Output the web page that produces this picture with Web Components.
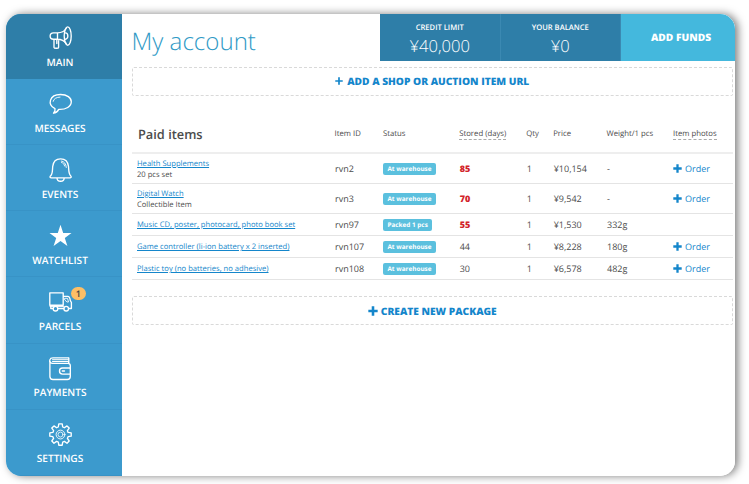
<!DOCTYPE html>
<html lang="en">
<head>
<meta charset="utf-8">
<title>My account</title>
<style>
body{margin:0;background:#fff;width:749px;height:484px;overflow:hidden;font-family:"Open Sans","Noto Sans",sans-serif;color:#4c4c4c;text-rendering:geometricPrecision}
</style>
</head>
<body>
<account-app></account-app>
<script>
function define(name, html){
  customElements.define(name, class extends HTMLElement{
    connectedCallback(){
      if(this.shadowRoot) return;
      const a = k => this.getAttribute(k) || '';
      this.attachShadow({mode:'open'}).innerHTML = typeof html === 'function' ? html(a) : html;
    }
  });
}

const ICONS = {
  megaphone:'<ellipse cx="18.700" cy="10" rx="3.500" ry="9.200"/><path d="M17.200 2.500C15 6 12 6.800 8.500 6.800H4.500C0 6.800 0 13.200 4.500 13.200H8.500C12 13.200 15 14.300 17.200 17.500M8.500 6.800V13.200M5 13.400V21.500C5 22.600 9.600 22.600 9.600 21.500V13.400M7.800 13.400V17.500M16.300 6.900C19.700 6.900 19.700 13.200 16.300 13.200"/>',
  bubble:'<path d="M6 16.600C-1.800 12.800 0 2.500 11.500 2.500C18 2.500 22.300 5.600 22.300 9.800C22.300 14.500 17 17.700 9.800 17.400C8.500 19.700 6.500 21 4.500 21.200C5.800 19.700 6.300 18 6 16.600Z"/><path d="M4.200 9.300C4.600 6.700 7.500 5.200 11 5.100" stroke-width="0.900"/>',
  bell:'<path d="M1.200 18.200C3.800 16.400 3.300 13 3.700 8.500C4.200 3.500 7.500 .800 11.600 .800C15.700 .800 19 3.500 19.500 8.500C19.900 13 19.500 16.400 22 18.200C22.500 19.300 22 19.800 21 19.800H2.300C1.200 19.800 .700 19.200 1.200 18.200ZM8 20C8.200 24.300 15 24.300 15.200 20"/><path d="M12.300 3C15.200 3.300 17 5.800 17.300 9.500M12.500 4.500C14.500 5 15.300 6.200 15.600 8" stroke-width=".900"/>',
  star:'<path fill="#fff" stroke="none" d="M11.500 .800L14.200 8.900H22.500L15.800 13.900L18.400 22L11.500 17L4.600 22L7.200 13.900L.500 8.900H8.800Z"/>',
  truck:'<path d="M3.800 18.500H1.800V16M.800 2.800H14.200V15.200H.800ZM14.200 6.300H18.800C20.500 6.300 21 8 21.300 10.500L22.400 12.500V18.500H19.800M14.800 18.500H9.200"/><circle cx="6.500" cy="18.700" r="2.300"/><circle cx="17.200" cy="18.700" r="2.300"/><path d="M16 8.300H18.500L19.500 12H18L16 10.200ZM1 16.500H14.500" stroke-width=".900"/>',
  wallet:'<path d="M19.500 .900H4C0 .900 .600 4.500 .900 5.700V19.500C.900 21.400 2 22.500 4 22.500H18.300C20.300 22.500 21.300 21.500 21.300 19.500V17.200M21.300 11V8.600C21.300 7 20.300 6.300 19 6.300H3.500C1.800 6.300 .900 5.500 .900 4M19.800 1V6.300"/><path d="M3.500 2.700H19.500M3.500 4.500H19.500" stroke-width="1"/><path d="M21.300 11H13.500C9.500 11 9.500 17.100 13.500 17.100H21.300V11M13.300 14H15.500"/>',
  gear:'<path d="M9.300 4L9.800 .900H13.200L13.700 4L15.400 4.700L18 2.900L20.200 5.100L18.400 7.700L19.100 9.400L22.200 9.900V13.200L19.100 13.700L18.400 15.400L20.200 18L18 20.200L15.400 18.400L13.700 19.100L13.200 22.200H9.800L9.300 19.100L7.600 18.400L5 20.200L2.800 18L4.600 15.400L3.900 13.700L.800 13.200V9.900L3.900 9.400L4.600 7.700L2.800 5.100L5 2.900L7.600 4.700Z"/><circle cx="11.500" cy="11.550" r="4.400" stroke-width=".900"/><circle cx="11.500" cy="11.550" r="2.500" stroke-width=".800"/>'
};

define('nav-item', a => `<style>
:host{box-sizing:border-box;display:flex;flex-direction:column;align-items:center;height:66.150px;border-bottom:1px solid #3893c6;color:#fff;padding:13px 8px 0 0}
:host([active]){background:#2e7ea8;border-color:#2e7ea8;height:65px;padding-top:12px}
.pic{position:relative;width:23px;height:24px}
svg{display:block;fill:none;stroke:#fff;stroke-width:1.350;stroke-linejoin:round;stroke-linecap:round;overflow:visible}
.label{font-weight:600;font-size:10.100px;line-height:14px;margin-top:4.500px;white-space:nowrap}
.badge{position:absolute;left:22.500px;top:-3px;width:14.500px;height:13px;border-radius:7px;background:#fdbf66;color:#444;font-size:9px;font-weight:600;line-height:13px;text-align:center}
</style><div class="pic"><svg width="23" height="24" viewBox="0 0 23 24">${ICONS[a('icon')]}</svg>${a('badge')?`<span class="badge">${a('badge')}</span>`:''}</div><span class="label"><slot></slot></span>`);

define('side-nav', `<style>:host{display:block;box-sizing:border-box;width:116px;flex:none;background:#3c9acd}</style><slot></slot>`);

define('balance-box', a => `<style>
:host{box-sizing:border-box;display:flex;flex-direction:column;align-items:center;width:120.500px;height:46.500px;background:#2e7ea8;border-right:1px solid #3b89b2;color:#fff;padding-top:8px}
.t{font-size:7.600px;font-weight:600;line-height:12px;white-space:nowrap}
.v{font-size:16.600px;font-weight:300;line-height:24px}
</style><span class="t">${a('label')}</span><span class="v"><slot></slot></span>`);

define('funds-button', `<style>:host{box-sizing:border-box;display:flex;align-items:center;justify-content:center;flex:1;height:46.500px;background:#44b8dd;color:#fff;font-size:10.200px;font-weight:800;line-height:14px;padding:0 0 1px 6px}</style><slot></slot>`);

define('plus-icon', `<style>:host{display:inline-block;width:var(--s,9px);height:var(--s,9px)}svg{display:block;width:100%;height:100%}path{stroke-width:var(--w,2.300px)}</style>
<svg viewBox="0 0 9 9"><path d="M4.500 .300V8.700M.300 4.500H8.700" stroke="#1486cb"/></svg>`);

define('dashed-action', `<style>
:host{box-sizing:border-box;display:flex;align-items:center;justify-content:center;gap:var(--g,3px);height:29px;border:1px dashed #d9d9d9;border-radius:2px;color:#1486cb;font-size:10.180px;font-weight:800;line-height:14px;white-space:nowrap;padding-bottom:1px}
</style><plus-icon></plus-icon><span><slot></slot></span>`);

const GRID = 'display:grid;grid-template-columns:202.500px 48.500px 76.200px 67px 27px 53.300px 66.500px 1fr;align-items:center;box-sizing:border-box;';
define('table-head', `<style>
:host{${GRID}height:55px;border-bottom:2px solid #eee;font-size:7.750px;line-height:12px;padding-top:16px;white-space:nowrap}
b{font-weight:600;font-size:12.800px;line-height:18px;padding-left:6px}
u{text-decoration:none;border-bottom:1px dashed #aaa;display:block;width:max-content;line-height:10px;padding-top:1px}
</style><b>Paid items</b><span>Item ID</span><span>Status</span><span><u>Stored (days)</u></span><span>Qty</span><span>Price</span><span>Weight/1 pcs</span><span><u>Item photos</u></span>`);

define('item-row', a => `<style>
:host{${GRID}height:22px;border-bottom:1px solid #e4e4e4;font-size:9px;line-height:12px;white-space:nowrap}
:host([note]){height:30px}
.n{font-size:7.620px;line-height:11px;padding:2px 0 0 5px}
.n a{color:#1486cb;text-decoration:underline;text-underline-offset:1px}
.n span{display:block}
.id,.q,.p,.w{padding-left:.500px}
.s{align-self:center;padding-top:1.500px}
.s i{display:inline-block;vertical-align:top;font-style:normal;background:#5bc0de;color:#fff;font-weight:700;font-size:6.400px;line-height:12px;height:12px;border-radius:2px;padding:0 4.400px}
.d{padding-left:.500px}
.d.hot{color:#d2232a;font-weight:800}
.o{color:#1486cb;display:flex;align-items:center;gap:3px}
</style><div class="n"><a>${a('name')}</a>${a('note')?`<span>${a('note')}</span>`:''}</div><span class="id">${a('code')}</span><span class="s"><i>${a('status')}</i></span><span class="d ${+a('days')>50?'hot':''}">${a('days')}</span><span class="q">1</span><span class="p">${a('price')}</span><span class="w">${a('weight')}</span>${a('photos')==='none'?'<span></span>':'<span class="o"><plus-icon></plus-icon>Order</span>'}`);

define('account-app', `<style>
:host{display:block;box-sizing:border-box;padding:14px 0 0 6px;width:749px;height:484px}
.card{display:flex;width:729px;height:462px;border-radius:15px;overflow:hidden;background:#fff}
.shadow{width:729px;border-radius:15px;box-shadow:3px 0 9px rgba(0,0,0,.500)}
main{flex:1;min-width:0;display:flex;flex-direction:column}
header{display:flex;height:46.500px}
h1{margin:0;box-sizing:border-box;width:258px;flex:none;padding-left:9.500px;font-weight:300;font-size:24.100px;line-height:55px;color:#2f9ac6;white-space:nowrap}
section{padding:6.500px 2.500px 0 10px}
.gap{height:3px}
</style>
<div class="shadow"><div class="card">
<side-nav>
<nav-item icon="megaphone" active>MAIN</nav-item><nav-item icon="bubble">MESSAGES</nav-item><nav-item icon="bell">EVENTS</nav-item><nav-item icon="star">WATCHLIST</nav-item><nav-item icon="truck" badge="1">PARCELS</nav-item><nav-item icon="wallet">PAYMENTS</nav-item><nav-item icon="gear">SETTINGS</nav-item>
</side-nav>
<main>
<header><h1>My account</h1><balance-box label="CREDIT LIMIT">¥40,000</balance-box><balance-box label="YOUR BALANCE">¥0</balance-box><funds-button>ADD FUNDS</funds-button></header>
<section>
<dashed-action style="--w:1.900px;--s:8px;--g:4px">ADD A SHOP OR AUCTION ITEM URL</dashed-action>
<div class="gap"></div>
<table-head></table-head>
<item-row name="Health Supplements" note="20 pcs set" code="rvn2" status="At warehouse" days="85" price="¥10,154" weight="-"></item-row>
<item-row name="Digital Watch" note="Collectible Item" code="rvn3" status="At warehouse" days="70" price="¥9,542" weight="-"></item-row>
<item-row name="Music CD, poster, photocard, photo book set" code="rvn97" status="Packed 1 pcs" days="55" price="¥1,530" weight="332g" photos="none"></item-row>
<item-row name="Game controller (li-ion battery x 2 inserted)" code="rvn107" status="At warehouse" days="44" price="¥8,228" weight="180g"></item-row>
<item-row name="Plastic toy (no batteries, no adhesive)" code="rvn108" status="At warehouse" days="30" price="¥6,578" weight="482g"></item-row>
<dashed-action style="margin-top:16px;--s:10px;padding:0">CREATE NEW PACKAGE</dashed-action>
</section>
</main></div></div>`);
</script>
</body>
</html>
